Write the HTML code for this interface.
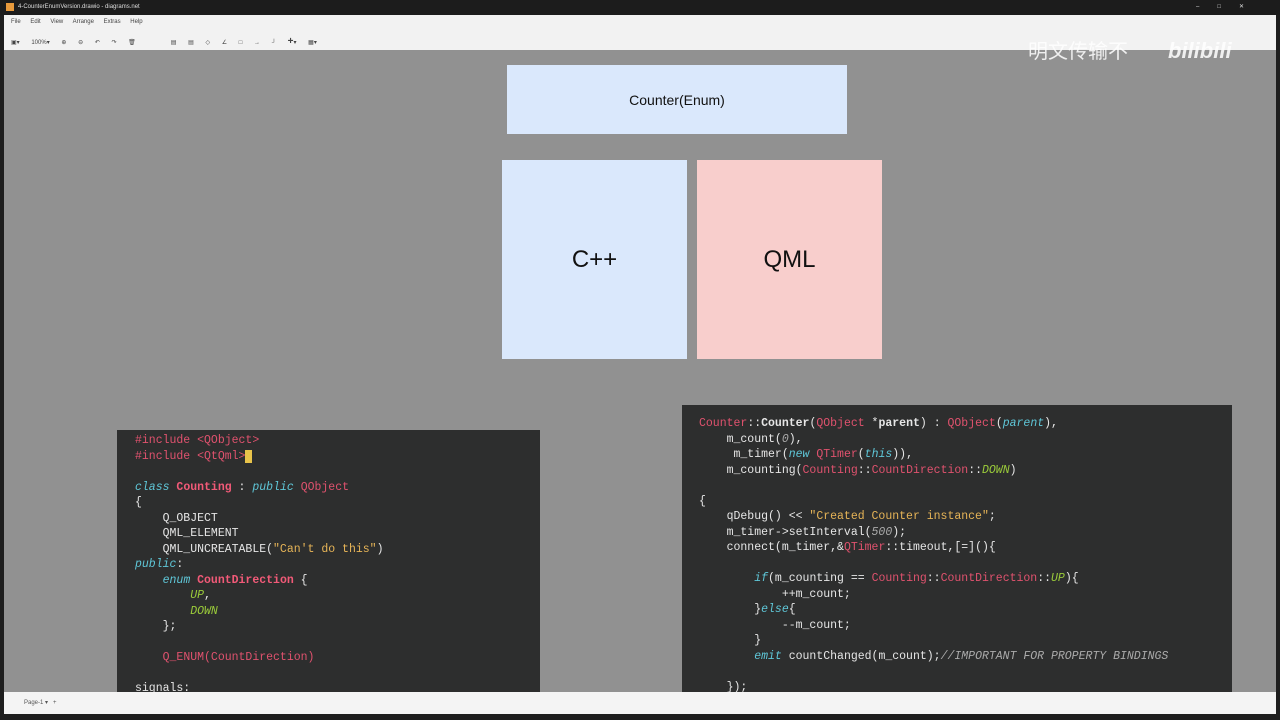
<!DOCTYPE html>
<html><head><meta charset="utf-8"><style>
*{margin:0;padding:0;box-sizing:border-box}
body{width:1280px;height:720px;overflow:hidden;background:#1e1e1e;font-family:"Liberation Sans",sans-serif;position:relative}
.title{position:absolute;left:0;top:0;width:1280px;height:15px;background:#1c1c1c;color:#ddd;font-size:6px;line-height:15px;padding-left:18px}
.menu{position:absolute;left:4px;top:15px;width:1272px;height:35px;background:#f2f2f2;font-size:6px;color:#444}
.canvas{position:absolute;left:4px;top:50px;width:1272px;height:642px;background:#919191}
.foot{position:absolute;left:4px;top:692px;width:1272px;height:22px;background:#f4f4f4;font-size:6px;color:#555;line-height:22px;padding-left:20px}
.box{position:absolute;display:flex;align-items:center;justify-content:center;color:#111}
.code{position:absolute;background:#2d2e2e;font-family:"Liberation Mono",monospace;font-size:11.5px;line-height:15.5px;color:#e6e6e6;white-space:pre;overflow:hidden}
.k{color:#e0526e}.kb{color:#f25a78;font-weight:bold}.i{color:#5fc7d8;font-style:italic}.g{color:#9bcc3a;font-style:italic}.s{color:#e6b457}.c{color:#aaa;font-style:italic}.w{font-weight:bold}
</style></head><body>
<div class="title">4-CounterEnumVersion.drawio - diagrams.net<span style="position:absolute;right:18px;letter-spacing:18px">–□✕</span></div>
<div style="position:absolute;left:6px;top:3px;width:8px;height:8px;background:#e89a3c"></div>
<div class="menu"><div style="position:absolute;left:7px;top:4px;word-spacing:8px">File Edit View Arrange Extras Help</div>
<div style="position:absolute;left:7px;top:21px;word-spacing:10px">▣▾ 100%▾ ⊕ ⊖ ↶ ↷ 🗑 &nbsp; ▤ ▤ ◇ ∠ □ → ┘ <b style="font-size:10px">+</b>▾ ▦▾</div></div>
<div class="canvas"></div>
<div style="position:absolute;left:1028px;top:35px;color:rgba(255,255,255,.85);font-size:20px;font-family:'Noto Sans CJK SC',sans-serif">明文传输不</div>
<div style="position:absolute;left:1168px;top:38px;color:rgba(255,255,255,.85);font-size:22px;font-weight:bold;font-style:italic">bilibili</div>
<div class="box" style="left:507px;top:65px;width:340px;height:69px;background:#dae8fc;font-size:14px">Counter(Enum)</div>
<div class="box" style="left:502px;top:160px;width:185px;height:199px;background:#dae8fc;font-size:24px">C++</div>
<div class="box" style="left:697px;top:160px;width:185px;height:199px;background:#f8cecc;font-size:24px">QML</div>
<div class="code" style="left:117px;top:430px;width:423px;height:262px;padding:3px 0 0 18px"><span class="k">#include &lt;QObject&gt;</span>
<span class="k">#include &lt;QtQml&gt;</span><span style="background:#e8c34a"> </span>

<span class="i">class</span> <span class="kb">Counting</span> : <span class="i">public</span> <span class="k">QObject</span>
{
    Q_OBJECT
    QML_ELEMENT
    QML_UNCREATABLE(<span class="s">"Can't do this"</span>)
<span class="i">public</span>:
    <span class="i">enum</span> <span class="kb">CountDirection</span> {
        <span class="g">UP</span>,
        <span class="g">DOWN</span>
    };

    <span class="k">Q_ENUM(CountDirection)</span>

signals:</div>
<div class="code" style="left:682px;top:405px;width:550px;height:287px;padding:11px 0 0 17px"><span class="k">Counter</span>::<span class="w">Counter</span>(<span class="k">QObject</span> *<span class="w">parent</span>) : <span class="k">QObject</span>(<span class="i">parent</span>),
    m_count(<span class="c">0</span>),
     m_timer(<span class="i">new</span> <span class="k">QTimer</span>(<span class="i">this</span>)),
    m_counting(<span class="k">Counting</span>::<span class="k">CountDirection</span>::<span class="g">DOWN</span>)

{
    qDebug() &lt;&lt; <span class="s">"Created Counter instance"</span>;
    m_timer-&gt;setInterval(<span class="c">500</span>);
    connect(m_timer,&amp;<span class="k">QTimer</span>::timeout,[=](){

        <span class="i">if</span>(m_counting == <span class="k">Counting</span>::<span class="k">CountDirection</span>::<span class="g">UP</span>){
            ++m_count;
        }<span class="i">else</span>{
            --m_count;
        }
        <span class="i">emit</span> countChanged(m_count);<span class="c">//IMPORTANT FOR PROPERTY BINDINGS</span>

    });</div>
<div class="foot">Page-1 ▾ &nbsp; +</div>
</body></html>
